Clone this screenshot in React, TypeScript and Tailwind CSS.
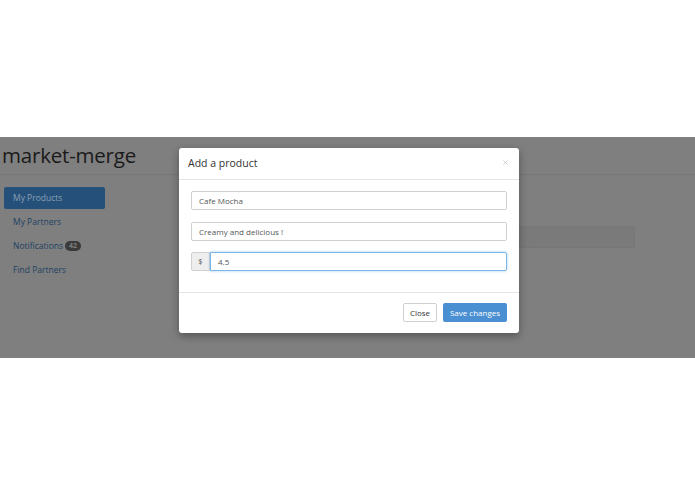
import { X } from "lucide-react";

export default function App() {
  const links = ["My Partners", "Notifications", "Find Partners"];

  return (
    <div className="flex h-[494px] w-[695px] flex-col bg-white font-['Open_Sans',sans-serif]">
      <div className="h-[137px] shrink-0" />
      <section className="relative h-[221px] shrink-0 overflow-hidden bg-[#7f7f7f]">
        {/* page behind the backdrop */}
        <header className="flex h-[38px] items-center border-b border-[#777777] pl-[2px]">
          <h1 className="text-[20.5px] leading-none tracking-[-0.2px] text-[#1a1a1a]">
            market-merge
          </h1>
        </header>
        <div className="flex">
          <nav className="flex w-[105px] shrink-0 flex-col gap-[2px] pl-1 pt-3 text-[8.5px]">
            <div className="flex h-[22px] items-center rounded-[2px] bg-[#255079] pl-[9px] text-[#8aa1b6]">
              My Products
            </div>
            {links.map((l) => (
              <div key={l} className="flex h-[22px] items-center gap-[2px] pl-[9px] text-[#1d4163]">
                {l}
                {l === "Notifications" && (
                  <span className="rounded-full bg-[#3a3a3a] px-[4px] text-[7px] font-bold leading-[10px] text-[#7f7f7f]">
                    42
                  </span>
                )}
              </div>
            ))}
          </nav>
          <main className="ml-[90px] flex-1 pr-[60px] pt-[51px]">
            <div className="h-[22px] rounded-[2px] border border-[#777777] bg-[#7a7a7a]" />
          </main>
        </div>

        {/* modal */}
        <div className="absolute left-[179px] top-[11px] w-[340px] rounded-[3px] bg-white shadow-[0_3px_9px_rgba(0,0,0,0.35)]">
          <div className="flex h-[32px] items-center justify-between border-b border-[#e5e5e5] pl-[9px] pr-[10px]">
            <h2 className="text-[10.5px] text-[#333333]">Add a product</h2>
            <X className="mb-[2px] h-[7px] w-[7px] text-[#c8c8c8]" strokeWidth={3} />
          </div>
          <div className="flex flex-col px-3 pb-[21px] pt-[11px] text-[8px] text-[#555555]">
            <div className="flex h-[19px] items-center rounded-[2px] border border-[#d0d0d0] px-[7px]">
              Cafe Mocha
            </div>
            <div className="mt-3 flex h-[19px] items-center rounded-[2px] border border-[#d0d0d0] px-[7px]">
              Creamy and delicious !
            </div>
            <div className="mt-[11px] flex h-[19px]">
              <span className="flex w-[19px] items-center justify-center rounded-l-[2px] border border-[#d0d0d0] bg-[#eeeeee] text-[7.5px]">
                $
              </span>
              <div className="flex flex-1 items-center rounded-r-[2px] border border-[#7cb5e6] px-[7px] shadow-[0_0_3px_rgba(102,175,233,0.6)]">
                4.5
              </div>
            </div>
          </div>
          <div className="flex justify-end gap-[6px] border-t border-[#e5e5e5] pb-[11px] pr-3 pt-[10px] text-[8px]">
            <button className="flex h-[19px] w-[34px] items-center justify-center rounded-[2px] border border-[#d0d0d0] bg-white text-[#333333]">
              Close
            </button>
            <button className="flex h-[19px] w-[64px] items-center justify-center rounded-[2px] bg-[#4a8fd1] text-white">
              Save changes
            </button>
          </div>
        </div>
      </section>
      <div className="flex-1" />
    </div>
  );
}
